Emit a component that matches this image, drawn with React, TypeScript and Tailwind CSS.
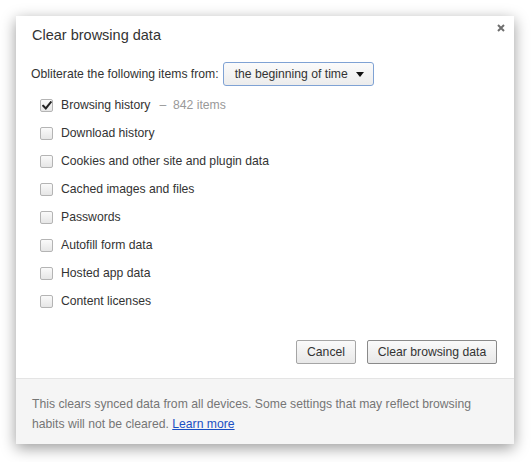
import React from "react";

const items = [
  { label: "Browsing history", checked: true, extra: "842 items" },
  { label: "Download history" },
  { label: "Cookies and other site and plugin data" },
  { label: "Cached images and files" },
  { label: "Passwords" },
  { label: "Autofill form data" },
  { label: "Hosted app data" },
  { label: "Content licenses" },
];

function Checkbox({ checked }: { checked?: boolean }) {
  return (
    <span className="relative flex h-[13px] w-[13px] shrink-0 items-center justify-center rounded-[2px] border border-[#b4b4b4] bg-gradient-to-b from-[#fafafa] to-[#e6e6e6]">
      {checked && (
        <svg width="10" height="9" viewBox="0 0 10 9" className="absolute left-[1px] top-[1px]">
          <path d="M1.2 4.8 L3.8 7.4 L8.8 1.2" fill="none" stroke="#222" strokeWidth="2" strokeLinecap="square" />
        </svg>
      )}
    </span>
  );
}

export default function App() {
  return (
    <div className="h-[462px] w-[531px] bg-white pl-[16px] pt-[16px]" style={{ fontFamily: '"Liberation Sans", Arial, sans-serif' }}>
      <div className="relative flex h-[428px] w-[498px] flex-col bg-white shadow-[0_4px_14px_rgba(0,0,0,0.4)]">
        <button className="absolute right-[9px] top-[8px] flex h-[8px] w-[8px] items-center justify-center" aria-label="close">
          <svg width="8" height="8" viewBox="0 0 8 8">
            <path d="M1 1 L7 7 M7 1 L1 7" stroke="#6f6f6f" strokeWidth="2" />
          </svg>
        </button>
        <div className="px-[16px] pt-[10px] text-[14.5px] leading-[18px] text-[#333]">Clear browsing data</div>
        <div className="mt-[18px] flex h-[24px] items-center px-[15px] text-[12.2px] text-[#333]">
          <span>Obliterate the following items from:</span>
          <div className="ml-[4px] flex h-[24px] w-[151px] items-center justify-between rounded-[3px] border border-[#7fa2d4] bg-gradient-to-b from-[#fbfbfb] to-[#ececec] pl-[11px] pr-[9px]">
            <span>the beginning of time</span>
            <svg width="8" height="5" viewBox="0 0 8 5">
              <path d="M0 0 L8 0 L4 5 Z" fill="#111" />
            </svg>
          </div>
        </div>
        <div className="mt-[5px] flex flex-col pl-[24px]">
          {items.map((it) => (
            <div key={it.label} className="flex h-[28px] items-center text-[12.2px] text-[#333]">
              <Checkbox checked={it.checked} />
              <span className="ml-[8px]">{it.label}</span>
              {it.extra && <span className="ml-[9px] text-[#999]">–&nbsp; {it.extra}</span>}
            </div>
          ))}
        </div>
        <div className="mt-[25px] flex justify-end gap-[11px] pr-[17px]">
          <button className="h-[24px] w-[60px] rounded-[2px] border border-[#a5a5a5] bg-gradient-to-b from-[#fafafa] to-[#e8e8e8] text-[12.2px] text-[#333]">Cancel</button>
          <button className="h-[24px] w-[130px] rounded-[2px] border border-[#8a8a8a] bg-gradient-to-b from-[#fafafa] to-[#e8e8e8] text-[12.2px] text-[#333]">Clear browsing data</button>
        </div>
        <div className="mt-[14px] flex-1 border-t border-[#e4e4e4] bg-[#f5f5f5] px-[16px] pt-[15px] text-[12.2px] leading-[20px] text-[#767676]">
          This clears synced data from all devices. Some settings that may reflect browsing habits will not be cleared.{" "}
          <a href="#" className="text-[#1a4fc4] underline">Learn more</a>
        </div>
      </div>
    </div>
  );
}
